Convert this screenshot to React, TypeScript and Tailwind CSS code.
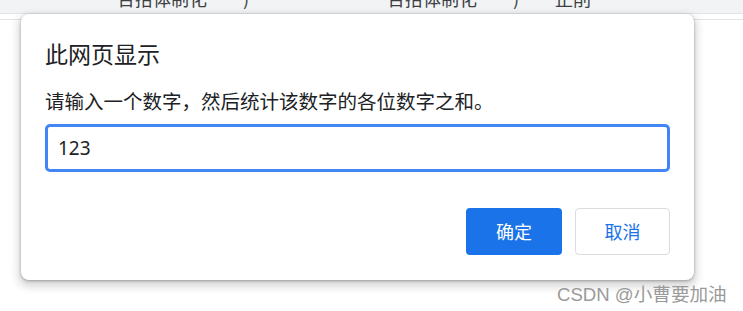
const cjk = "font-['Microsoft_YaHei','Noto_Sans_CJK_SC',sans-serif]";

export default function App() {
  return (
    <div className={`relative h-[311px] w-[743px] overflow-hidden bg-white ${cjk}`}>
      {/* browser strip at the top, mostly scrolled out of view */}
      <div className="h-[14px] overflow-hidden border-b border-[#e3e4e6] bg-[#f1f3f4]">
        <div className="-mt-[14px] flex whitespace-nowrap text-[18px] leading-[24px] text-[#3c4043]">
          <span className="ml-[117px] w-[270px]">合抬体制化　　)</span>
          <span>合抬体制化　　)　　正削</span>
        </div>
      </div>
      <div className="mt-[5px] border-t border-[#e3e4e6]" />

      {/* prompt dialog */}
      <div className="absolute left-[21px] top-[14px] w-[673px] rounded-[8px] bg-white px-[24px] pb-[25px] pt-[24px] shadow-[0_1px_3px_rgba(0,0,0,0.3),0_4px_8px_3px_rgba(0,0,0,0.15)]">
        <h1 className="text-[23px] leading-[30px] text-[#202124]">此网页显示</h1>
        <p className="mt-[20px] text-[19.5px] leading-[26px] text-[#202124]">
          请输入一个数字，然后统计该数字的各位数字之和。
        </p>
        <div className="mt-[10px] flex h-[48px] items-center rounded-[5px] border-[3px] border-[#4285f4] px-[10px] font-['Noto_Sans',sans-serif] text-[19px] text-[#202124]">
          123
        </div>
        <div className="mt-[36px] flex justify-end gap-[13px]">
          <button className="h-[47px] w-[96px] rounded-[4px] bg-[#1a73e8] text-[18px] text-white">确定</button>
          <button className="h-[47px] w-[95px] rounded-[4px] border border-[#dadce0] bg-white text-[18px] text-[#1a73e8]">取消</button>
        </div>
      </div>

      {/* watermark */}
      <div className="absolute left-[557px] top-[280px] whitespace-nowrap text-[18.6px] leading-[26px] text-[#9a9a9a]">
        <span className="font-['Liberation_Sans',sans-serif]">CSDN @</span>小曹要加油
      </div>
    </div>
  );
}
